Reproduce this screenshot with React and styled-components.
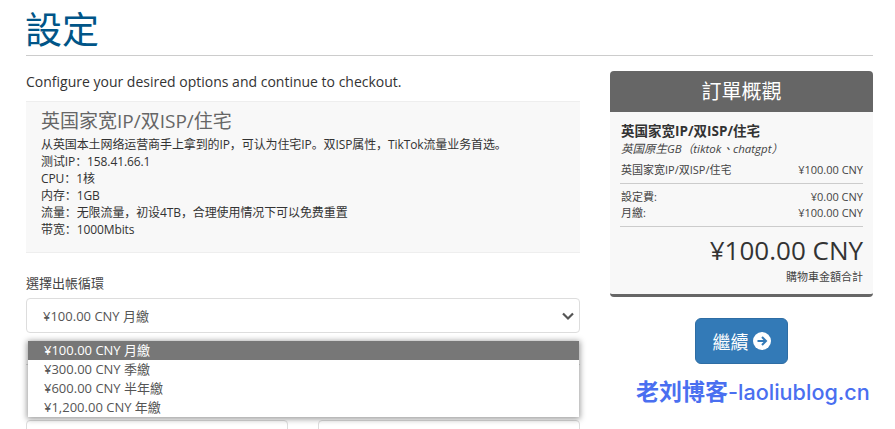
import styled, { createGlobalStyle } from "styled-components";

const cjk = `"Open Sans", "Noto Sans CJK SC", sans-serif`;
const tc = `"Open Sans", "Noto Sans CJK TC", sans-serif`;

const GlobalStyle = createGlobalStyle`
  html, body {
    margin: 0;
    padding: 0;
    height: 429px;
    overflow: hidden;
    background: #fff;
    font-family: ${tc};
    font-size: 14px;
    color: #333;
  }
`;

const Page = styled.div`
  position: relative;
  width: 895px;
  height: 429px;
  overflow: hidden;
  padding: 0 22px 0 26px;
  box-sizing: border-box;
`;

const Header = styled.header`
  height: 55px;
  border-bottom: 1px solid #ccc;
`;

const Title = styled.h1`
  margin: 0;
  padding-top: 7px;
  font-size: 37px;
  line-height: 46px;
  font-weight: 400;
  color: #058;
  margin-left: -1px;
`;

const Columns = styled.div`
  display: flex;
  gap: 30px;
  align-items: flex-start;
`;

const Main = styled.main`
  position: relative;
  width: 554px;
`;

const Side = styled.aside`
  width: 263px;
  padding-top: 15px;
`;

const Intro = styled.p`
  margin: 0;
  padding-top: 16px;
  height: 29px;
  line-height: 20px;
  font-size: 14px;
`;

const ProductInfo = styled.section`
  background: #f8f8f8;
  border-top: 1px solid #eee;
  border-bottom: 1px solid #eee;
  height: 143px;
  padding: 7px 15px 0;
`;

const ProductName = styled.h3`
  margin: 0 0 2px;
  font-size: 19px;
  line-height: 25px;
  font-weight: 400;
  color: #666;
  font-family: ${cjk};
`;

const ProductLine = styled.div`
  font-size: 12px;
  line-height: 17px;
  letter-spacing: -0.1px;
  color: #333;
  font-family: ${cjk};
`;

const Field = styled.div`
  margin-top: 22px;
`;

const Label = styled.label`
  display: block;
  font-size: 13px;
  line-height: 17px;
  margin-bottom: 6px;
  color: #444;
`;

const Select = styled.div`
  height: 33px;
  border: 1px solid #ddd;
  border-radius: 4px;
  display: flex;
  align-items: center;
  justify-content: space-between;
  padding: 0 4px 0 16px;
  font-size: 13px;
  color: #555;
`;

const Chevron = styled.svg`
  width: 14px;
  height: 14px;
  fill: none;
  stroke: #555;
  stroke-width: 2.2;
`;

const Divider = styled.div`
  margin-top: 31px;
  border-top: 1px solid #ddd;
`;

const InputRow = styled.div`
  display: grid;
  grid-template-columns: 1fr 1fr;
  gap: 30px;
  margin-top: 55px;
`;

const Input = styled.div`
  height: 34px;
  border: 1px solid #ddd;
  border-radius: 4px;
`;

const Dropdown = styled.ul`
  position: absolute;
  left: 2px;
  right: 1px;
  top: 285px;
  margin: 0;
  padding: 0;
  list-style: none;
  background: #fff;
  box-shadow: 0 1px 6px 1px rgba(0, 0, 0, 0.4);
`;

const Option = styled.li`
  height: 19px;
  line-height: 19px;
  padding-left: 16px;
  font-size: 13px;
  background: ${(p) => (p.$active ? "#777" : "#fff")};
  color: ${(p) => (p.$active ? "#fff" : "#555")};
`;

const Summary = styled.div`
  border-radius: 4px;
  background: #f8f8f8;
  border-bottom: 3px solid #666;
  overflow: hidden;
`;

const SummaryHead = styled.h2`
  margin: 0;
  height: 41px;
  line-height: 41px;
  background: #666;
  color: #fff;
  font-size: 20px;
  font-weight: 400;
  text-align: center;
`;

const SummaryBody = styled.div`
  padding: 10px 10px 0;
  height: 172px;
`;

const SummaryName = styled.div`
  font-size: 13.5px;
  line-height: 18px;
  font-weight: 700;
  color: #333;
  padding-left: 1px;
  font-family: ${cjk};
`;

const SummaryGroup = styled.em`
  display: block;
  font-size: 11.5px;
  line-height: 18px;
  color: #444;
  padding-left: 1px;
`;

const Row = styled.div`
  display: flex;
  justify-content: space-between;
  font-size: 11px;
  line-height: 16px;
  color: #444;
  padding-left: 1px;
`;

const Rows = styled.div`
  margin-top: ${(p) => p.$top || 0}px;
  padding-bottom: ${(p) => p.$bottom || 0}px;
  border-bottom: 1px solid #ccc;
`;

const Total = styled.div`
  text-align: right;
  font-size: 26px;
  line-height: 36px;
  color: #333;
  margin-top: 5px;
`;

const TotalLabel = styled.div`
  text-align: right;
  font-size: 11px;
  line-height: 14px;
  margin-top: 2px;
  color: #444;
`;

const Actions = styled.div`
  display: flex;
  justify-content: center;
  margin-top: 21px;
`;

const Continue = styled.button`
  width: 93px;
  height: 46px;
  border: 1px solid #2e6da4;
  border-radius: 6px;
  background: #337ab7;
  color: #fff;
  font-family: ${tc};
  font-size: 18px;
  display: flex;
  align-items: center;
  justify-content: center;
  gap: 4px;
  padding: 0;
`;

const ArrowIcon = styled.svg`
  width: 18px;
  height: 18px;
`;

const Watermark = styled.div`
  position: absolute;
  left: 636px;
  top: 379px;
  font-family: "Inter", "Noto Sans CJK SC", sans-serif;
  font-size: 21.6px;
  line-height: 26px;
  font-weight: 500;
  color: #4a6ff0;
  white-space: nowrap;
`;

const WatermarkCn = styled.span`
  font-size: 23px;
  font-weight: 700;
`;

export default function App() {
  return (
    <Page>
      <GlobalStyle />
      <Header>
        <Title>設定</Title>
      </Header>
      <Columns>
        <Main>
          <Intro>Configure your desired options and continue to checkout.</Intro>
          <ProductInfo>
            <ProductName>英国家宽IP/双ISP/住宅</ProductName>
            <ProductLine>从英国本土网络运营商手上拿到的IP，可认为住宅IP。双ISP属性，TikTok流量业务首选。</ProductLine>
            <ProductLine>测试IP：158.41.66.1</ProductLine>
            <ProductLine>CPU：1核</ProductLine>
            <ProductLine>内存：1GB</ProductLine>
            <ProductLine>流量：无限流量，初设4TB，合理使用情况下可以免费重置</ProductLine>
            <ProductLine>带宽：1000Mbits</ProductLine>
          </ProductInfo>
          <Field>
            <Label>選擇出帳循環</Label>
            <Select>
              <span>¥100.00 CNY 月繳</span>
              <Chevron viewBox="0 0 14 14">
                <path d="M2 4.5 7 9.5 12 4.5" />
              </Chevron>
            </Select>
          </Field>
          <Divider />
          <InputRow>
            <Input />
            <Input />
          </InputRow>
          <Dropdown>
            <Option $active>¥100.00 CNY 月繳</Option>
            <Option>¥300.00 CNY 季繳</Option>
            <Option>¥600.00 CNY 半年繳</Option>
            <Option>¥1,200.00 CNY 年繳</Option>
          </Dropdown>
        </Main>
        <Side>
          <Summary>
            <SummaryHead>訂單概觀</SummaryHead>
            <SummaryBody>
              <SummaryName>英国家宽IP/双ISP/住宅</SummaryName>
              <SummaryGroup>英国原生GB（tiktok、chatgpt）</SummaryGroup>
              <Rows $top={4} $bottom={5}>
                <Row>
                  <span>英国家宽IP/双ISP/住宅</span>
                  <span>¥100.00 CNY</span>
                </Row>
              </Rows>
              <Rows $top={5} $bottom={5}>
                <Row>
                  <span>設定費:</span>
                  <span>¥0.00 CNY</span>
                </Row>
                <Row>
                  <span>月繳:</span>
                  <span>¥100.00 CNY</span>
                </Row>
              </Rows>
              <Total>¥100.00 CNY</Total>
              <TotalLabel>購物車金額合計</TotalLabel>
            </SummaryBody>
          </Summary>
          <Actions>
            <Continue>
              繼續
              <ArrowIcon viewBox="0 0 18 18">
                <circle cx="9" cy="9" r="9" fill="#fff" />
                <path d="M4.5 9h8M9 5l4 4-4 4" fill="none" stroke="#337ab7" strokeWidth="2" />
              </ArrowIcon>
            </Continue>
          </Actions>
        </Side>
      </Columns>
      <Watermark>
        <WatermarkCn>老刘博客</WatermarkCn>-laoliublog.cn
      </Watermark>
    </Page>
  );
}
